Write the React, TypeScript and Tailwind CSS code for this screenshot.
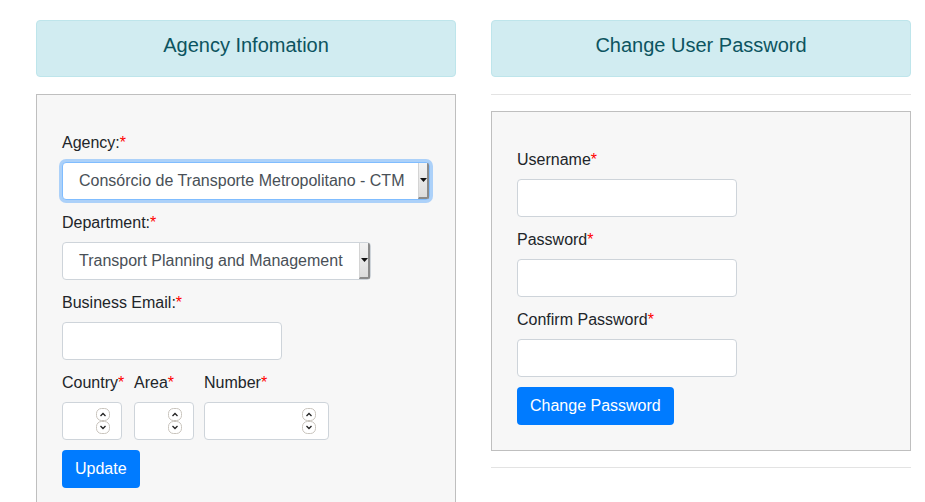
import React from "react";

const Star = () => <span className="text-[#ff0000]">*</span>;

function Label({ children }: { children: React.ReactNode }) {
  return <div className="h-[24px] leading-[24px] pt-[1px] mb-[8px] text-[16px] text-[#212529]">{children}</div>;
}

function Select({ text, focused, w }: { text: string; focused?: boolean; w: string }) {
  return (
    <div
      className={
        "flex h-[38px] items-stretch bg-white rounded-[4px] border " + w + " " +
        (focused
          ? "border-[#80bdff] shadow-[0_0_0_3px_rgba(0,123,255,0.3)]"
          : "border-[#ced4da]")
      }
    >
      <div className="flex-1 pl-[16px] flex items-center text-[16px] text-[#495057] whitespace-nowrap">{text}</div>
      <div className="w-[11px] flex items-center justify-center bg-[linear-gradient(#f3f3f3,#dcdcdc)] border-l border-[#d4d4d4] border-r-2 border-r-[#8a8a8a] border-b-2 border-b-[#8a8a8a] rounded-r-[2px]">
        <svg width="7" height="4" viewBox="0 0 7 4"><path d="M0 0h7L3.5 4z" fill="#111" /></svg>
      </div>
    </div>
  );
}

function Input({ w }: { w: string }) {
  return <div className={"h-[38px] bg-white border border-[#ced4da] rounded-[4px] " + w} />;
}

function Spin() {
  return (
    <svg width="14" height="26" viewBox="0 0 14 26" className="block">
      <rect x="0.5" y="0.5" width="13" height="12" rx="5" fill="#fff" stroke="#c9c4bd" />
      <rect x="0.5" y="13.5" width="13" height="12" rx="5" fill="#fff" stroke="#c9c4bd" />
      <path d="M4.5 8l2.5-2.5L9.5 8" fill="none" stroke="#222" strokeWidth="1.3" />
      <path d="M4.5 18l2.5 2.5L9.5 18" fill="none" stroke="#222" strokeWidth="1.3" />
    </svg>
  );
}

function NumInput({ w, pr }: { w: string; pr: string }) {
  return (
    <div className={"h-[38px] bg-white border border-[#ced4da] rounded-[4px] flex items-center justify-end " + w + " " + pr}>
      <Spin />
    </div>
  );
}

function Button({ children }: { children: React.ReactNode }) {
  return (
    <div className="inline-flex h-[38px] items-center px-[13px] bg-[#007bff] text-white text-[16px] rounded-[4px]">
      {children}
    </div>
  );
}

function Header({ children }: { children: React.ReactNode }) {
  return (
    <div className="shrink-0 h-[57px] bg-[#d1ecf1] border border-[#bee5eb] rounded-[4px] text-[#0c5460] text-[20px] leading-[30px] pt-[9px] text-center">
      {children}
    </div>
  );
}

export default function App() {
  return (
    <div className="w-[925px] h-[502px] overflow-hidden bg-white pl-[36px] pt-[20px] flex items-start gap-[35px] font-['Liberation_Sans',Arial,sans-serif]">
      <div className="w-[420px] shrink-0">
        <Header>Agency Infomation</Header>
        <div className="mt-[17px] border border-[#bfbfbf] bg-[#f7f7f7] pl-[25px] pt-[35px] pb-[40px]">
          <Label>Agency:<Star /></Label>
          <Select text="Consórcio de Transporte Metropolitano - CTM" focused w="w-[368px]" />
          <div className="h-[10px]" />
          <Label>Department:<Star /></Label>
          <Select text="Transport Planning and Management" w="w-[309px]" />
          <div className="h-[10px]" />
          <Label>Business Email:<Star /></Label>
          <Input w="w-[220px]" />
          <div className="h-[10px]" />
          <div className="flex">
            <div className="w-[72px]">
              <Label>Country<Star /></Label>
              <NumInput w="w-[60px]" pr="pr-[11px]" />
            </div>
            <div className="w-[70px]">
              <Label>Area<Star /></Label>
              <NumInput w="w-[60px]" pr="pr-[11px]" />
            </div>
            <div>
              <Label>Number<Star /></Label>
              <NumInput w="w-[125px]" pr="pr-[12px]" />
            </div>
          </div>
          <div className="h-[10px]" />
          <Button>Update</Button>
        </div>
      </div>
      <div className="w-[420px] shrink-0">
        <Header>Change User Password</Header>
        <div className="mt-[17px] h-[1px] bg-[#e3e3e3]" />
        <div className="mt-[16px] border border-[#bfbfbf] bg-[#f7f7f7] pl-[25px] pt-[35px] pb-[25px]">
          <Label>Username<Star /></Label>
          <Input w="w-[220px]" />
          <div className="h-[10px]" />
          <Label>Password<Star /></Label>
          <Input w="w-[220px]" />
          <div className="h-[10px]" />
          <Label>Confirm Password<Star /></Label>
          <Input w="w-[220px]" />
          <div className="h-[10px]" />
          <Button>Change Password</Button>
        </div>
        <div className="mt-[16px] h-[1px] bg-[#e3e3e3]" />
      </div>
    </div>
  );
}
